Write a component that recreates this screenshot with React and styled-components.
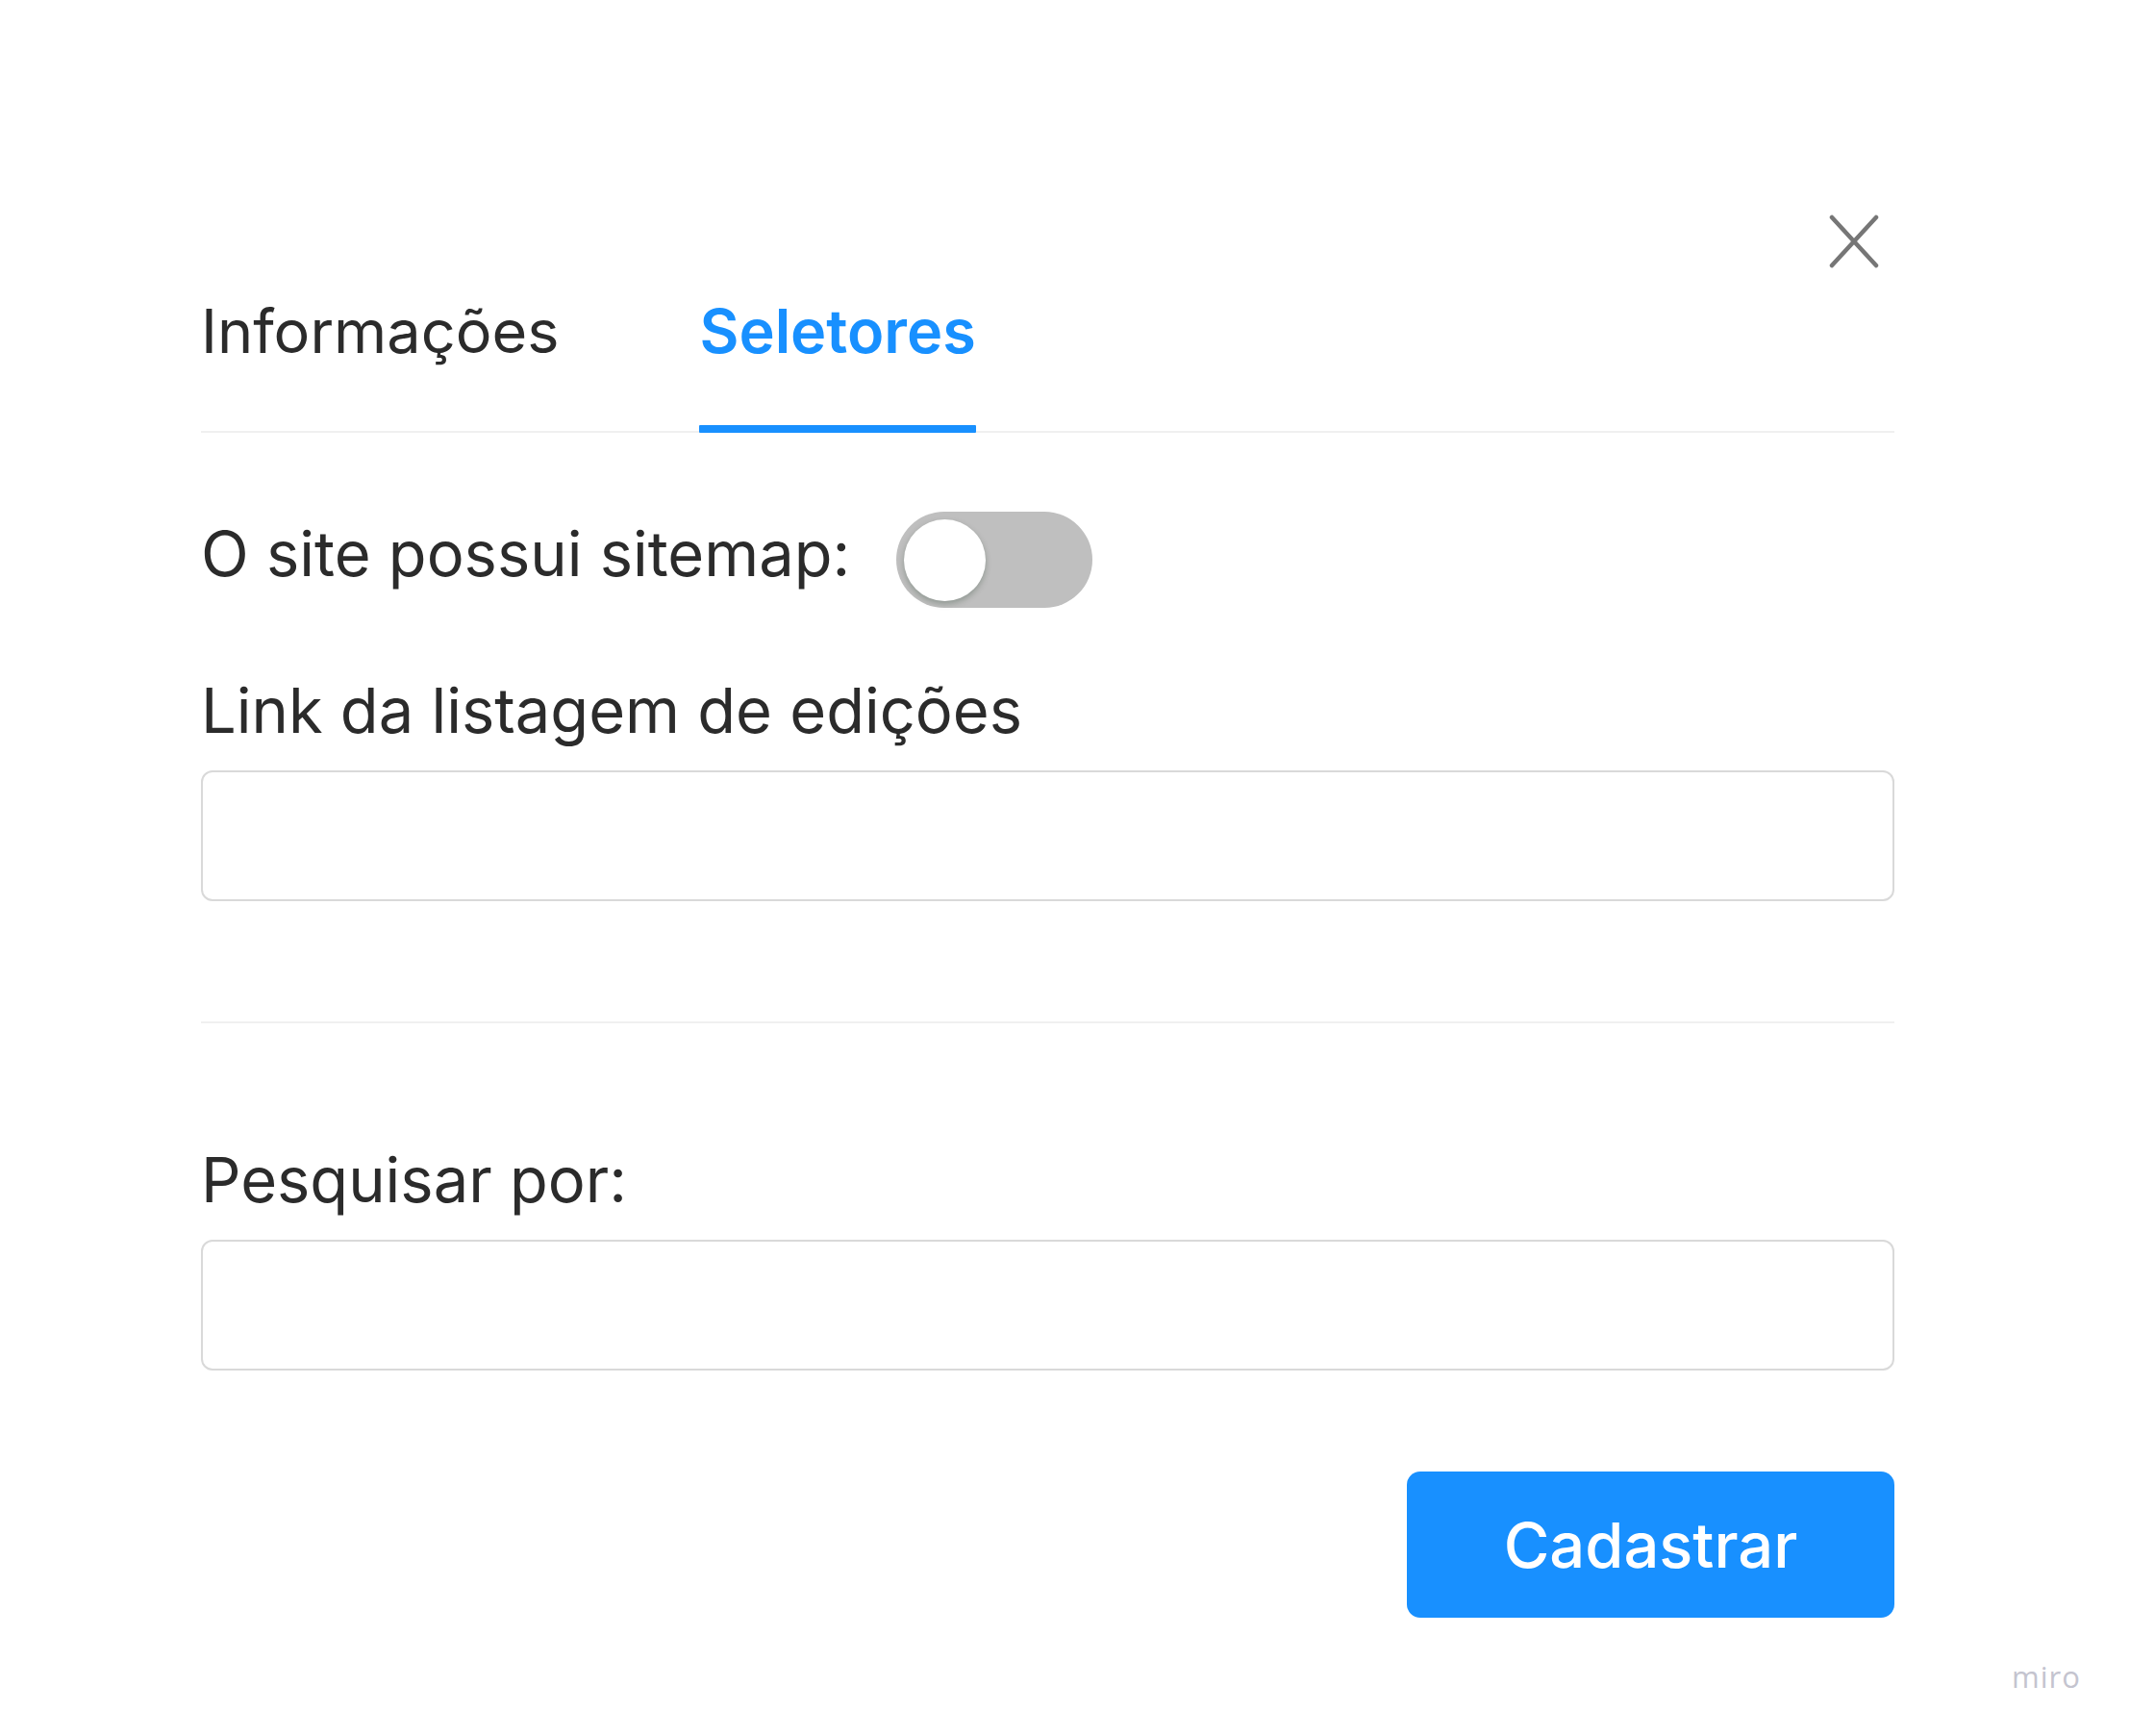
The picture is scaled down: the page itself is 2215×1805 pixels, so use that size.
import React, { useState } from "react";
import styled, { createGlobalStyle } from "styled-components";

const Global = createGlobalStyle`
  html, body { margin: 0; padding: 0; background: #ffffff; }
  body { font-family: Inter, "Noto Sans", "Liberation Sans", sans-serif; }
  * { box-sizing: border-box; }
`;

const Page = styled.div`
  position: relative;
  width: 2215px;
  min-height: 1805px;
  background: #ffffff;
`;

const Modal = styled.div`
  display: flex;
  flex-direction: column;
  padding: 223px 245px 0 209px;
`;

const CloseRow = styled.div`
  display: flex;
  justify-content: flex-end;
  padding-right: 16px;
  height: 84px;
`;

const CloseButton = styled.button`
  width: 52px;
  height: 56px;
  padding: 0;
  border: none;
  background: none;
  cursor: pointer;
  color: #767676;
  display: flex;
  align-items: center;
  justify-content: center;
`;

const TabBar = styled.div`
  display: flex;
  gap: ${(p) => p.$gap}px;
  border-bottom: 2px solid #f0f0f0;
`;

const Tab = styled.div`
  position: relative;
  padding-bottom: 66px;
  font-size: 63px;
  line-height: 75px;
  font-weight: ${(p) => (p.$active ? 600 : 400)};
  color: ${(p) => (p.$active ? "#1890ff" : "#2b2b2b")};
  cursor: pointer;
`;

const TabInk = styled.span`
  position: absolute;
  left: 0;
  right: 0;
  bottom: -2px;
  height: 8px;
  background: #1890ff;
  border-radius: 1px;
`;

const Body = styled.div`
  display: flex;
  flex-direction: column;
`;

const ToggleRow = styled.div`
  display: flex;
  align-items: flex-start;
  gap: 48px;
  margin-top: 82px;
`;

const Label = styled.label`
  display: block;
  font-size: 65px;
  line-height: 79px;
  color: #2b2b2b;
  margin-top: ${(p) => p.$top || 0}px;
`;

const Track = styled.button`
  position: relative;
  width: 204px;
  height: 100px;
  border: none;
  padding: 0;
  border-radius: 50px;
  background: ${(p) => (p.$on ? "#1890ff" : "#bfbfbf")};
  cursor: pointer;
`;

const Knob = styled.span`
  position: absolute;
  top: 7.5px;
  left: ${(p) => (p.$on ? 111 : 8)}px;
  width: 85px;
  height: 85px;
  border-radius: 50%;
  background: #ffffff;
  box-shadow: 0 3px 6px rgba(0, 35, 11, 0.25);
`;

const Field = styled.div`
  display: flex;
  flex-direction: column;
  gap: 23px;
  margin-top: ${(p) => p.$top}px;
`;

const Input = styled.input`
  width: 100%;
  height: 136px;
  border: 2px solid #d9d9d9;
  border-radius: 12px;
  background: #ffffff;
  padding: 0 30px;
  font-size: 60px;
  font-family: inherit;
  color: #2b2b2b;
  outline: none;
`;

const Divider = styled.hr`
  margin: 125px 0 0;
  border: none;
  border-top: 2px solid #f0f0f0;
  height: 0;
`;

const Footer = styled.div`
  display: flex;
  justify-content: flex-end;
  margin-top: 105px;
`;

const PrimaryButton = styled.button`
  width: 507px;
  height: 152px;
  border: none;
  border-radius: 14px;
  background: #1890ff;
  color: #ffffff;
  font-family: inherit;
  font-size: 65px;
  font-weight: 500;
  cursor: pointer;
`;

const Watermark = styled.span`
  position: absolute;
  left: 2092px;
  top: 1722px;
  font-family: "Open Sans", "Noto Sans", sans-serif;
  font-size: 31px;
  letter-spacing: 1px;
  color: #c4c4cf;
`;

export default function App() {
  const [on, setOn] = useState(false);
  return (
    <Page>
      <Global />
      <Modal>
        <CloseRow>
          <CloseButton aria-label="Fechar">
            <svg width="52" height="56" viewBox="0 0 52 56" fill="none">
              <path
                d="M3 3 L49 53 M49 3 L3 53"
                stroke="currentColor"
                strokeWidth="4.5"
                strokeLinecap="round"
              />
            </svg>
          </CloseButton>
        </CloseRow>
        <TabBar $gap={146}>
          <Tab>Informações</Tab>
          <Tab $active>
            Seletores
            <TabInk />
          </Tab>
        </TabBar>
        <Body>
          <ToggleRow>
            <Label $top={4}>O site possui sitemap:</Label>
            <Track $on={on} onClick={() => setOn(!on)} aria-label="sitemap">
              <Knob $on={on} />
            </Track>
          </ToggleRow>
          <Field $top={67}>
            <Label>Link da listagem de edições</Label>
            <Input type="text" />
          </Field>
          <Divider />
          <Field $top={123}>
            <Label>Pesquisar por:</Label>
            <Input type="text" />
          </Field>
          <Footer>
            <PrimaryButton>Cadastrar</PrimaryButton>
          </Footer>
        </Body>
      </Modal>
      <Watermark>miro</Watermark>
    </Page>
  );
}
